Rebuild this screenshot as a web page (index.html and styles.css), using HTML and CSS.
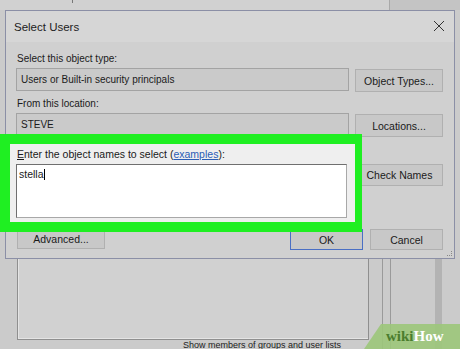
FILE: index.html
```html
<!DOCTYPE html>
<html lang="en">
<head>
	<meta charset="UTF-8">
	<title>Select Users</title>
	<link rel="stylesheet" href="styles.css">
</head>
<body>
	<div id="backTop">
		<div class="backWindow"><span class="tick"></span></div>
	</div>

	<div id="dialog">
		<div class="titleBar">
			<span class="title">Select Users</span>
			<svg class="closeIcon" width="12" height="12" viewBox="0 0 12 12">
				<path d="M1 1 L11 11 M11 1 L1 11" stroke="#333" stroke-width="1" fill="none"/>
			</svg>
		</div>
		<div class="content">
			<div class="label">Select this object type:</div>
			<div class="row">
				<div class="field">Users or Built-in security principals</div>
				<button class="btn wide">Object Types...</button>
			</div>
			<div class="label second">From this location:</div>
			<div class="row">
				<div class="field">STEVE</div>
				<button class="btn wide">Locations...</button>
			</div>
			<div class="row namesRow">
				<div class="highlight">
					<div class="inner">
						<div class="label"><u>E</u>nter the object names to select (<a href="#">examples</a>):</div>
						<div class="names">stella<span class="caret"></span></div>
					</div>
				</div>
				<button class="btn check">Check Names</button>
			</div>
			<div class="row actions">
				<button class="btn advanced">Advanced...</button>
				<span class="spacer"></span>
				<button class="btn small ok">OK</button>
				<button class="btn small">Cancel</button>
			</div>
		</div>
		<span class="grip"></span>
	</div>

	<div id="backBottom">
		<div class="listFrame"></div>
		<div class="sideLines">
			<span class="line1"></span>
			<span class="line2"></span>
			<span class="band"></span>
		</div>
		<div class="caption">Show members of groups and user lists</div>
	</div>

	<div id="badge">
		<svg class="badgeShape" width="96" height="25" viewBox="0 0 96 25">
			<polygon points="17,0 96,0 96,25 0,25" fill="#9cc77a" fill-opacity="0.9"/>
		</svg>
		<span class="wiki">wiki</span><span class="how">How</span>
	</div>
</body>
</html>
```

FILE: styles.css
```css
html, body {
	margin: 0;
	height: 100%;
	overflow: hidden;
}
body {
	background-color: #cbcbcb;
	font-family: "Liberation Sans", Arial, sans-serif;
	font-size: 10px;
	color: #1a1a1a;
	position: relative;
}
#backTop {
	height: 10px;
	background-color: #c4c4c4;
}
#backTop .backWindow {
	width: 389px;
	height: 10px;
	background-color: #d1d1d1;
	border-right: 1px solid #a9a9a9;
	position: relative;
}
#backTop .tick {
	position: absolute;
	left: 72px;
	top: 0;
	width: 1px;
	height: 3px;
	background-color: #777;
}

/* dialog */
#dialog {
	margin-left: 5px;
	width: 448px;
	border: 1px solid #8b8fa6;
	background-color: #d0d0d0;
	position: relative;
	z-index: 1;
}
.titleBar {
	height: 31px;
	background-color: #d6d6d6;
	display: flex;
	align-items: center;
	justify-content: space-between;
	padding: 0 9px 0 8px;
}
.title {
	font-size: 11.5px;
	color: #222;
}
.closeIcon {
	margin-top: -2px;
}
.content {
	padding: 0 11px 8px 10px;
}
.label {
	height: 13px;
	line-height: 13px;
	padding-left: 1px;
	margin-top: 10px;
}
.label.second {
	margin-top: 5px;
}
.row {
	display: flex;
	align-items: flex-start;
	margin-top: 3px;
}
.field {
	box-sizing: border-box;
	width: 333px;
	height: 23px;
	line-height: 21px;
	padding-left: 4px;
	background-color: #cacaca;
	border: 1px solid #a3a3a3;
}
.btn {
	box-sizing: border-box;
	height: 23px;
	margin: 1px 0 0 6px;
	padding: 0;
	font-family: inherit;
	font-size: 10.5px;
	color: #1a1a1a;
	background-color: #c8c8c8;
	border: 1px solid #b0b0b0;
}
.btn.wide {
	width: 88px;
}

/* green highlight around the names box */
.namesRow {
	margin-top: -3px;
}
.highlight {
	margin-left: -16px;
	width: 345px;
	border-style: solid;
	border-color: #1fef22;
	border-width: 10px 7px 10px 10px;
	position: relative;
	z-index: 2;
}
.highlight .inner {
	background-color: #efefef;
	height: 78px;
	padding: 0 0 0 6px;
	overflow: hidden;
}
.highlight .label {
	margin-top: 4px;
	font-size: 10.5px;
}
.highlight a {
	color: #2a5db5;
}
.names {
	box-sizing: border-box;
	margin-top: 3px;
	width: 331px;
	height: 54px;
	background-color: #fff;
	border: 1px solid #a8a8a8;
	border-top-color: #6f6f6f;
	border-left-color: #6f6f6f;
	padding: 3px 2px;
	font-size: 10.5px;
}
.caret {
	display: inline-block;
	width: 1px;
	height: 11px;
	background-color: #000;
	vertical-align: -2px;
}
.btn.check {
	width: 87px;
	height: 22px;
	margin: 30px 0 0 -6px;
}
.actions {
	margin-top: -3px;
}
.btn.advanced {
	width: 88px;
	height: 20px;
	margin: 0 0 0 1px;
}
.spacer {
	flex: 1;
}
.btn.small {
	width: 73px;
	height: 21px;
	margin: 0 0 0 7px;
}
.btn.ok {
	border: 1px solid #4a6fc4;
	margin-left: 0;
}
.grip {
	position: absolute;
	right: 2px;
	bottom: 2px;
	width: 4px;
	height: 4px;
	border-right: 1px dotted #888;
	border-bottom: 1px dotted #888;
}

/* window behind */
#backBottom {
	position: relative;
	height: 92px;
}
.listFrame {
	margin-left: 17px;
	width: 350px;
	height: 80px;
	border: 1px solid #8f8f8f;
	border-top: none;
	box-shadow: inset 1px -1px 0 #e4e4e4;
	background-color: #d1d1d1;
}
.sideLines span {
	position: absolute;
	top: 0;
	height: 100%;
	width: 1px;
	background-color: #9a9a9a;
}
.sideLines .line1 {
	left: 382px;
}
.sideLines .line2 {
	left: 390px;
}
.sideLines .band {
	left: 435px;
	width: 7px;
	background-color: #b3b3b3;
}
.caption {
	position: absolute;
	left: 183px;
	top: 81px;
	font-size: 9px;
	line-height: 10px;
	white-space: nowrap;
	color: #222;
}

/* watermark */
#badge {
	position: absolute;
	right: 0;
	bottom: 0;
	width: 96px;
	height: 25px;
	z-index: 3;
	font-family: "Liberation Serif", "Times New Roman", serif;
	font-weight: bold;
	font-size: 15px;
	line-height: 25px;
	padding-left: 22px;
	box-sizing: border-box;
}
.badgeShape {
	position: absolute;
	left: 0;
	top: 0;
	z-index: -1;
}
.wiki {
	color: #4b7d2e;
}
.how {
	color: #fff;
}
```
